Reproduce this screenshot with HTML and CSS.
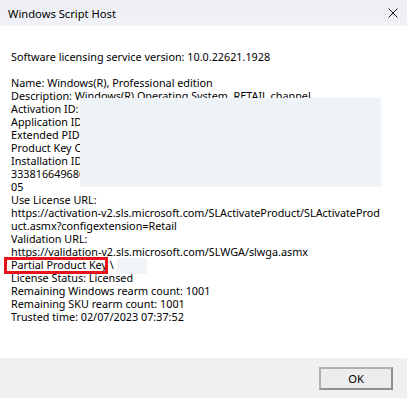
FILE: index.html
```html
<!DOCTYPE html>
<html>
<head>
    <meta charset="UTF-8">
    <title>Windows Script Host</title>
    <link rel="stylesheet" href="styles.css">
</head>
<body>

<div id="dialog">
    <div class="titlebar">
        <span class="title">Windows Script Host</span>
        <span class="close">
            <svg width="10" height="10" viewBox="0 0 10 10"><path d="M0.5 0.5 L9.5 9.5 M9.5 0.5 L0.5 9.5" stroke="#1a1a1a" stroke-width="1"/></svg>
        </span>
    </div>
    <div class="content">
        <div class="line">Software licensing service version: 10.0.22621.1928</div>
        <div class="line">&nbsp;</div>
        <div class="line">Name: Windows(R), Professional edition</div>
        <div class="line">Description: Windows(R) Operating System, RETAIL channel</div>
        <div class="line">Activation ID:</div>
        <div class="line">Application ID</div>
        <div class="line">Extended PID:</div>
        <div class="line">Product Key C</div>
        <div class="line">Installation ID</div>
        <div class="line">333816649680</div>
        <div class="line">05</div>
        <div class="line">Use License URL:</div>
        <div class="line">https://activation-v2.sls.microsoft.com/SLActivateProduct/SLActivateProd</div>
        <div class="line">uct.asmx?configextension=Retail</div>
        <div class="line">Validation URL:</div>
        <div class="line">https://validation-v2.sls.microsoft.com/SLWGA/slwga.asmx</div>
        <div class="line">Partial Product Key \</div>
        <div class="line">License Status: Licensed</div>
        <div class="line">Remaining Windows rearm count: 1001</div>
        <div class="line">Remaining SKU rearm count: 1001</div>
        <div class="line">Trusted time: 02/07/2023 07:37:52</div>

        <div class="redact big"></div>
        <div class="redact small"></div>
        <div class="mark"></div>
    </div>
    <div class="footer">
        <a href="javascript:;" class="btn">OK</a>
    </div>
</div>

</body>
</html>
```

FILE: styles.css
```css
*{ margin: 0; padding: 0; text-decoration: none;}
body { background: #fff; font-family: "Noto Sans", "Liberation Sans", sans-serif; font-size: 10.8px; color: #000;}
#dialog { width: 407px; height: 398px; display: flex; flex-direction: column; overflow: hidden;}
.titlebar { height: 26px; display: flex; align-items: center; justify-content: space-between; padding: 0 9px 0 8px; background: linear-gradient(#eceef4, #f0f2f7);}
.title { font-size: 11.2px; color: #000;}
.close { display: flex; align-items: center;}
.content { flex: 1; position: relative; padding: 24px 0 0 11px; background: #fff;}
.line { height: 13px; line-height: 13px; white-space: nowrap;}
.redact { position: absolute; background: #eef3f7;}
.big { left: 80px; top: 72px; width: 301px; height: 89px;}
.small { left: 117px; top: 232px; width: 30px; height: 16px; background: #f1f4f9;}
.mark { position: absolute; left: 4px; top: 231px; width: 98px; height: 11px; border: 3px solid #e5141a;}
.footer { height: 40px; display: flex; align-items: center; justify-content: flex-end; padding-right: 14px; background: #f0f0f0;}
.btn { display: flex; align-items: center; justify-content: center; width: 70px; height: 19px; border: 2px solid #8f8f8f; border-top-color: #b0b0b0; border-left-color: #b0b0b0; background: #ececec; color: #000; font-size: 11.2px;}
```
